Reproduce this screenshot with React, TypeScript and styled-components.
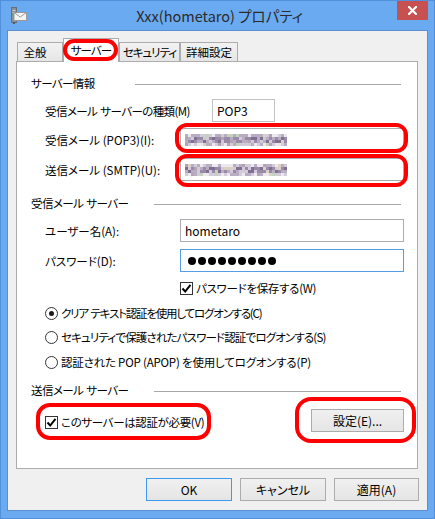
import React from 'react';
import styled, { createGlobalStyle, css } from 'styled-components';

const FONT = `"Noto Sans CJK JP", "Noto Sans", sans-serif`;

const GlobalStyle = createGlobalStyle`
  html, body {
    margin: 0;
    padding: 0;
    background: #ffffff;
  }
`;

/* ---------- mosaic (blurred server names) ---------- */

const MOSAIC = ['#ebe8ee', '#d3cbd9', '#b9adc4', '#9a8aaa', '#806f90', '#c4d2bb', '#ddd2c2', '#b4a3b2'];

const mosaicCells = (seed: number) => {
  let s = seed;
  const rnd = () => {
    s = (s * 1103515245 + 12345) & 0x7fffffff;
    return s / 0x7fffffff;
  };
  const cells: { c: number; r: number; fill: string }[] = [];
  for (let c = 0; c < 34; c++) {
    for (let r = 0; r < 4; r++) {
      const edge = r === 0 || r === 3;
      let idx = edge ? Math.floor(rnd() * 3) : 1 + Math.floor(rnd() * 4);
      if (rnd() < 0.14) idx = 5 + Math.floor(rnd() * 3);
      cells.push({ c, r, fill: MOSAIC[idx] });
    }
  }
  return cells;
};

const Mosaic = ({ seed }: { seed: number }) => (
  <svg width="102" height="12" viewBox="0 0 102 12">
    {mosaicCells(seed).map(({ c, r, fill }) => (
      <rect key={`${c}-${r}`} x={c * 3} y={r * 3} width="3" height="3" fill={fill} />
    ))}
  </svg>
);

/* ---------- icons ---------- */

const AppIcon = () => (
  <svg width="16" height="17" viewBox="0 0 16 17">
    <rect x="0.5" y="0.5" width="5" height="15" fill="#8c9096" stroke="#6b6f75" />
    <rect x="1.5" y="3" width="3" height="1" fill="#c9ccd0" />
    <rect x="1.5" y="5" width="3" height="1" fill="#c9ccd0" />
    <rect x="1.5" y="8" width="2" height="1.5" fill="#3cc43c" />
    <rect x="3" y="5.5" width="12.5" height="8" fill="#f4f4f4" stroke="#9a9a9a" />
    <path d="M3 5.5 L9.25 10 L15.5 5.5" fill="none" stroke="#9a9a9a" />
    <rect x="2" y="15" width="2" height="2" fill="#55595e" />
  </svg>
);

const CloseGlyph = () => (
  <svg width="9" height="9" viewBox="0 0 9 9">
    <path d="M1 1 L8 8 M8 1 L1 8" stroke="#ffffff" strokeWidth="2.2" strokeLinecap="square" />
  </svg>
);

const CheckGlyph = () => (
  <svg width="11" height="11" viewBox="0 0 11 11">
    <path d="M1.5 5.5 L4.2 8.5 L9.5 1.8" fill="none" stroke="#000000" strokeWidth="2" />
  </svg>
);

/* ---------- app ---------- */

const App = () => {
  return (
    <>
      <GlobalStyle />
      <Window>
        <TitleBar>
          <TitleIcon>
            <AppIcon />
          </TitleIcon>
          <TitleText>Xxx(hometaro) プロパティ</TitleText>
          <CloseButton>
            <CloseGlyph />
          </CloseButton>
        </TitleBar>

        <Client>
          <TabStrip>
            <Tab $w={46} $padRight={10}>全般</Tab>
            <Tab $w={56} $ls={-1} $active>
              サーバー
            </Tab>
            <Tab $w={61} $ls={-1}>セキュリティ</Tab>
            <Tab $w={58}>詳細設定</Tab>
          </TabStrip>

          <Panel>
            <GroupHeader $mt={0}>
              <GroupTitle $w={104} $ls={-0.6}>サーバー情報</GroupTitle>
              <GroupLine />
            </GroupHeader>
            <FieldRow $mt={8}>
              <FieldLabel $w={167} $ls={-0.6}>受信メール&#x2004;サーバーの種類(M)</FieldLabel>
              <TextBox $w={63} $muted>
                POP3
              </TextBox>
            </FieldRow>
            <FieldRow $mt={6}>
              <FieldLabel $w={135}>受信メール (POP3)(I):</FieldLabel>
              <Ring $t={5} $r={4} $b={2} $l={5} $radius={12}>
                <TextBox $w={224}>
                  <Mosaic seed={17} />
                </TextBox>
              </Ring>
            </FieldRow>
            <FieldRow $mt={7}>
              <FieldLabel $w={135}>送信メール (SMTP)(U):</FieldLabel>
              <Ring $t={4} $r={4} $b={6} $l={5} $radius={12}>
                <TextBox $w={224}>
                  <Mosaic seed={91} />
                </TextBox>
              </Ring>
            </FieldRow>

            <GroupHeader $mt={14}>
              <GroupTitle $w={123} $ls={-0.6}>受信メール&#x2004;サーバー</GroupTitle>
              <GroupLine />
            </GroupHeader>
            <FieldRow $mt={8}>
              <FieldLabel $w={135}>ユーザー名(A):</FieldLabel>
              <TextBox $w={224}>hometaro</TextBox>
            </FieldRow>
            <FieldRow $mt={7}>
              <FieldLabel $w={135}>パスワード(D):</FieldLabel>
              <TextBox $w={224} $focused>
                <Dots>
                  {Array.from({ length: 9 }).map((_, i) => (
                    <Dot key={i} />
                  ))}
                </Dots>
              </TextBox>
            </FieldRow>
            <OptionRow $mt={8} $indent={149} $ls={-0.3}>
              <CheckBox>
                <CheckGlyph />
              </CheckBox>
              パスワードを保存する(W)
            </OptionRow>

            <OptionRow $mt={9} $indent={14} $ls={-1.2}>
              <Radio $checked />
              クリア&#x2004;テキスト認証を使用してログオンする(C)
            </OptionRow>
            <OptionRow $mt={8} $indent={14} $ls={-0.85}>
              <Radio />
              セキュリティで保護されたパスワード認証でログオンする(S)
            </OptionRow>
            <OptionRow $mt={9} $indent={14} $ls={-0.2}>
              <Radio />
              認証された POP (APOP) を使用してログオンする(P)
            </OptionRow>

            <GroupHeader $mt={12}>
              <GroupTitle $w={123} $ls={-0.6}>送信メール&#x2004;サーバー</GroupTitle>
              <GroupLine />
            </GroupHeader>
            <AuthRow>
              <Ring $t={11} $r={6} $b={10} $l={9} $radius={14} $w={160}>
                <OptionRow $mt={0} $indent={0} $ls={-0.35}>
                  <CheckBox>
                    <CheckGlyph />
                  </CheckBox>
                  このサーバーは認証が必要(V)
                </OptionRow>
              </Ring>
              <Ring $t={12} $r={12} $b={11} $l={16} $radius={16}>
                <Button $w={93}>設定(E)...</Button>
              </Ring>
            </AuthRow>
          </Panel>

          <ButtonBar>
            <Button $w={86} $default>
              OK
            </Button>
            <Button $w={86}>キャンセル</Button>
            <Button $w={85}>適用(A)</Button>
          </ButtonBar>
        </Client>
      </Window>
    </>
  );
};

const Window = styled.div`
  box-sizing: border-box;
  width: 435px;
  height: 519px;
  display: flex;
  flex-direction: column;
  background: #6aaaf1;
  border: 1px solid #5290dc;
  font-family: ${FONT};
  font-feature-settings: 'palt';
  font-size: 11.5px;
  color: #000000;
`;

const TitleBar = styled.div`
  height: 29px;
  display: grid;
  grid-template-columns: 1fr auto 1fr;
  align-items: start;
  padding: 0 6px 0 10px;
`;

const TitleIcon = styled.div`
  margin-top: 6px;
  display: flex;
`;

const TitleText = styled.div`
  align-self: center;
  font-size: 14.5px;
  color: #2b2b2b;
  line-height: 20px;
  margin-top: 1px;
`;

const CloseButton = styled.div`
  justify-self: end;
  width: 31px;
  height: 19px;
  background: #c75050;
  display: flex;
  align-items: center;
  justify-content: center;
`;

const Client = styled.div`
  box-sizing: border-box;
  flex: 1;
  margin: 0 6px 7px;
  padding: 7px 8px 9px 8px;
  background: #f0f0f0;
  border: 1px solid #5b8fcf;
  display: flex;
  flex-direction: column;
`;

const TabStrip = styled.div`
  height: 23px;
  display: flex;
  align-items: flex-end;
  padding-left: 1px;
`;

const Tab = styled.div<{ $w: number; $active?: boolean; $padRight?: number; $ls?: number }>`
  box-sizing: border-box;
  width: ${(p) => p.$w}px;
  height: 19px;
  padding-right: ${(p) => p.$padRight ?? 0}px;
  border: 1px solid #acacac;
  border-bottom: none;
  background: linear-gradient(#f2f2f2, #e6e6e6);
  display: flex;
  align-items: center;
  justify-content: center;
  white-space: nowrap;
  letter-spacing: ${(p) => p.$ls ?? 0}px;

  ${(p) =>
    p.$active &&
    css`
      height: 24px;
      margin-bottom: -1px;
      background: #ffffff;
      position: relative;
      z-index: 1;
      padding-bottom: 2px;

      &::after {
        content: '';
        position: absolute;
        top: 0;
        left: -1px;
        right: 0;
        bottom: 1px;
        border: 4px solid #ff0000;
        border-radius: 11px;
      }
    `}
`;

const Panel = styled.div`
  box-sizing: border-box;
  width: 402px;
  height: 408px;
  padding: 13px 13px 0 14px;
  background: #ffffff;
  border: 1px solid #acacac;
  display: flex;
  flex-direction: column;
`;

const GroupHeader = styled.div<{ $mt: number }>`
  height: 16px;
  margin-top: ${(p) => p.$mt}px;
  display: flex;
  align-items: center;
`;

const GroupTitle = styled.span<{ $w: number; $ls?: number }>`
  width: ${(p) => p.$w}px;
  flex-shrink: 0;
  white-space: nowrap;
  letter-spacing: ${(p) => p.$ls ?? 0}px;
`;

const GroupLine = styled.div`
  flex: 1;
  height: 1px;
  margin: 2px 3px 0 0;
  background: #a8a8a8;
`;

const FieldRow = styled.div<{ $mt: number }>`
  height: 23px;
  margin-top: ${(p) => p.$mt}px;
  padding-left: 14px;
  display: flex;
  align-items: center;
`;

const FieldLabel = styled.label<{ $w: number; $ls?: number }>`
  width: ${(p) => p.$w}px;
  flex-shrink: 0;
  white-space: nowrap;
  letter-spacing: ${(p) => p.$ls ?? 0}px;
`;

const TextBox = styled.div<{ $w: number; $focused?: boolean; $muted?: boolean }>`
  box-sizing: border-box;
  width: ${(p) => p.$w}px;
  height: 23px;
  padding-left: 4px;
  background: #ffffff;
  border: 1px solid ${(p) => (p.$focused ? '#569de5' : p.$muted ? '#c3c3c3' : '#abadb3')};
  display: flex;
  align-items: center;
  font-size: 12px;
`;

const Ring = styled.div<{ $t: number; $r: number; $b: number; $l: number; $radius: number; $w?: number }>`
  position: relative;
  display: flex;
  ${(p) => p.$w && `width: ${p.$w}px;`}

  &::after {
    content: '';
    position: absolute;
    top: ${(p) => -p.$t}px;
    right: ${(p) => -p.$r}px;
    bottom: ${(p) => -p.$b}px;
    left: ${(p) => -p.$l}px;
    border: 4px solid #ff0000;
    border-radius: ${(p) => p.$radius}px;
    pointer-events: none;
  }
`;

const Dots = styled.div`
  display: flex;
  gap: 2px;
  padding-left: 3px;
`;

const Dot = styled.span`
  width: 8px;
  height: 8px;
  border-radius: 50%;
  background: #000000;
`;

const OptionRow = styled.div<{ $mt: number; $indent: number; $ls?: number }>`
  height: 16px;
  margin-top: ${(p) => p.$mt}px;
  padding-left: ${(p) => p.$indent}px;
  display: flex;
  align-items: center;
  gap: 3px;
  white-space: nowrap;
  letter-spacing: ${(p) => p.$ls ?? 0}px;
`;

const CheckBox = styled.span`
  box-sizing: border-box;
  width: 13px;
  height: 13px;
  flex-shrink: 0;
  border: 1px solid #333333;
  background: #ffffff;
  display: flex;
  align-items: center;
  justify-content: center;
`;

const Radio = styled.span<{ $checked?: boolean }>`
  box-sizing: border-box;
  width: 13px;
  height: 13px;
  flex-shrink: 0;
  border: 1px solid #333333;
  border-radius: 50%;
  background: #ffffff;
  display: flex;
  align-items: center;
  justify-content: center;

  &::after {
    content: '';
    width: 5px;
    height: 5px;
    border-radius: 50%;
    background: ${(p) => (p.$checked ? '#1a1a1a' : 'transparent')};
  }
`;

const AuthRow = styled.div`
  height: 23px;
  margin-top: 11px;
  padding-left: 14px;
  display: flex;
  align-items: center;
  justify-content: space-between;

  & > div:first-child {
    margin-top: 3px;
  }
`;

const Button = styled.button<{ $w: number; $default?: boolean }>`
  box-sizing: border-box;
  width: ${(p) => p.$w}px;
  height: 23px;
  padding: 0;
  font: inherit;
  font-size: 12px;
  color: #000000;
  background: linear-gradient(#f0f0f0, #e5e5e5);
  border: 1px solid ${(p) => (p.$default ? '#3c9bf0' : '#acacac')};
  border-radius: 0;
`;

const ButtonBar = styled.div`
  margin-top: 9px;
  display: flex;
  justify-content: flex-end;
  gap: 8px;
`;

export default App;
